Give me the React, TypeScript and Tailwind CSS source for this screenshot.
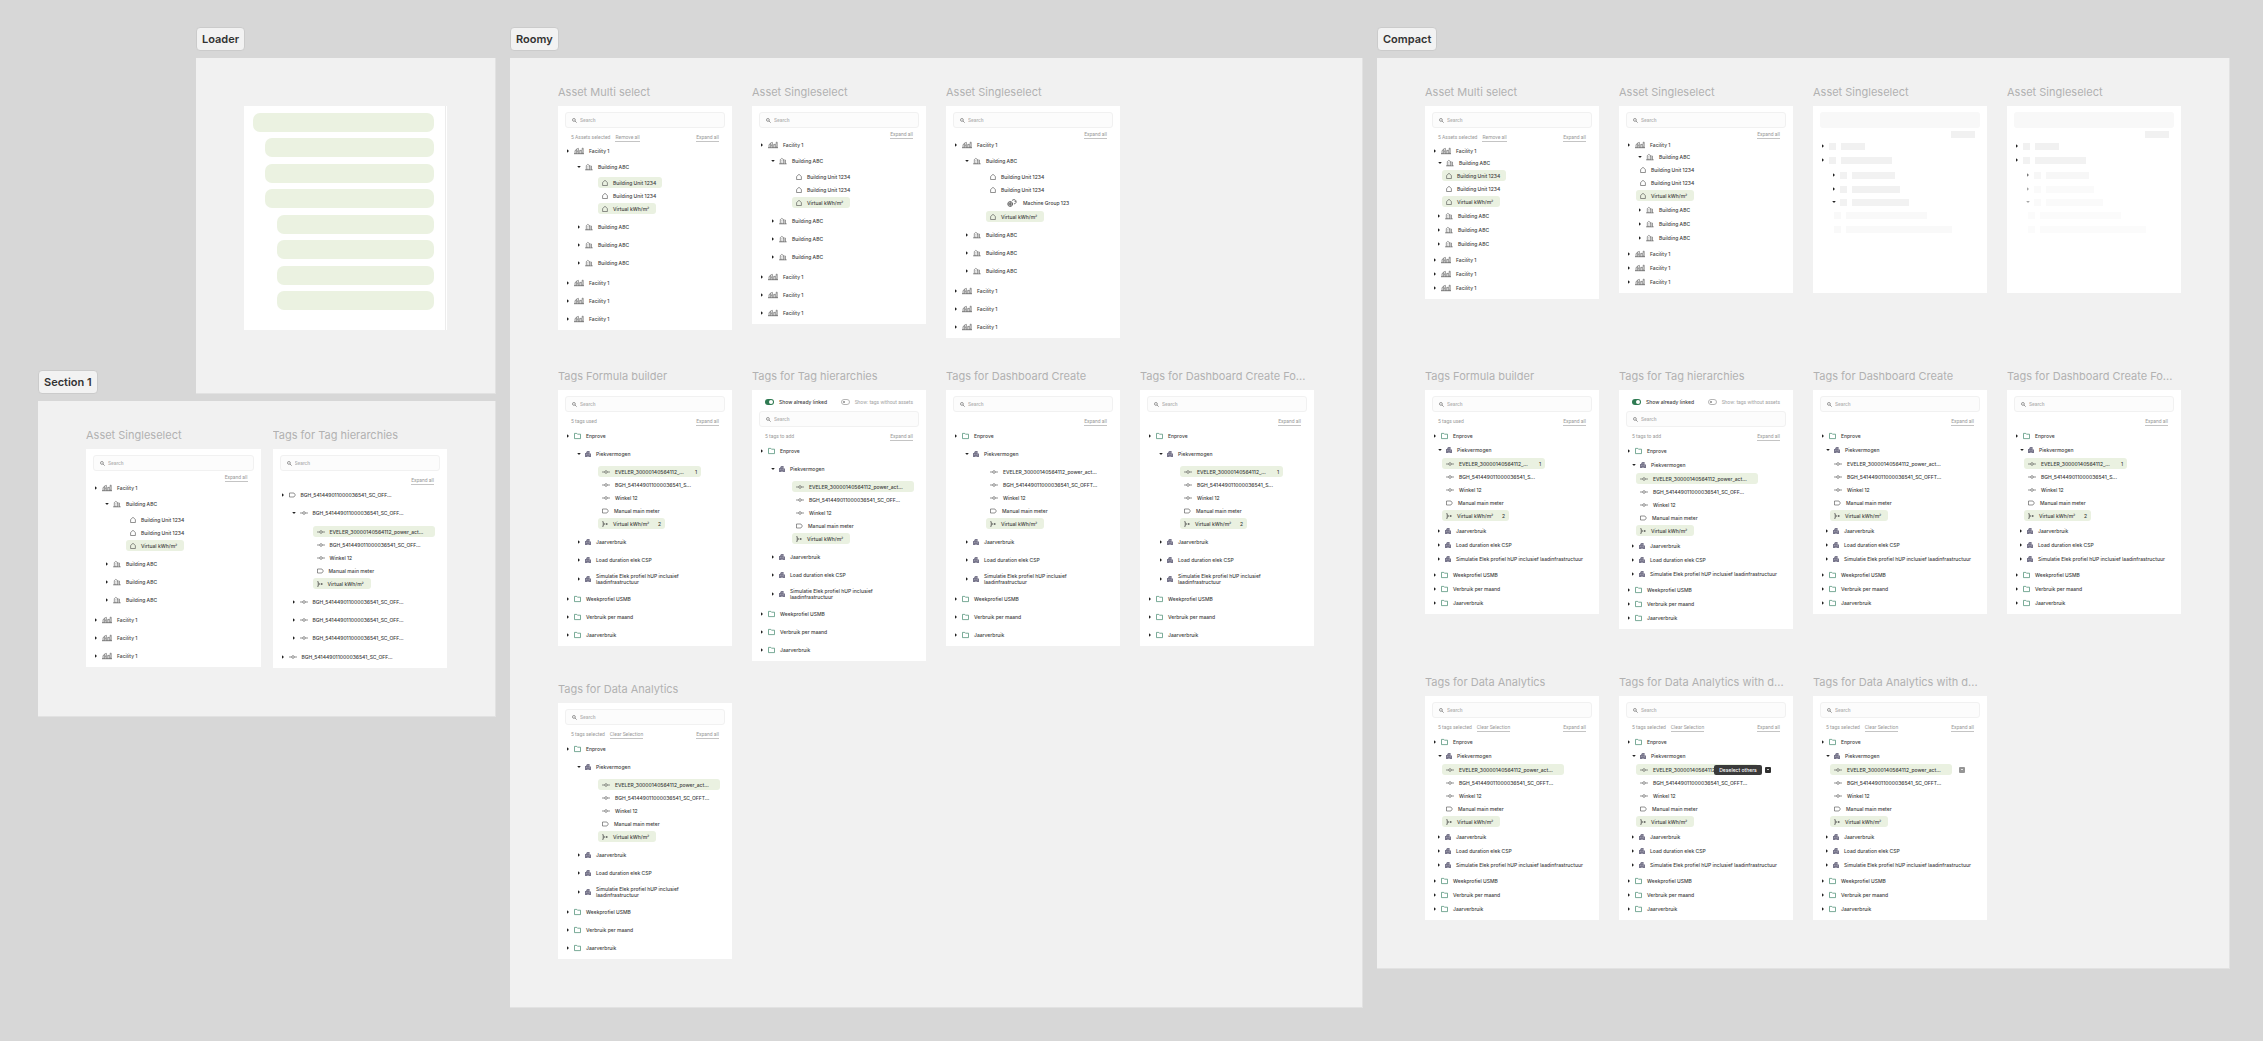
import React from "react";

type IconName = "facility" | "building" | "house" | "folder" | "office" | "meter" | "tag" | "virtual" | "machine";

type Row = {
  label: string;
  icon: IconName;
  caret?: "right" | "down";
  pad: keyof typeof PAD;
  h: keyof typeof HEIGHT;
  selected?: boolean;
  count?: number;
  width?: keyof typeof WIDTH;
  wrap?: boolean;
  action?: "tooltip" | "plain";
};

type Group = { gap?: keyof typeof GAP; rows: Row[] };

type Card = {
  title: string;
  info?: string;
  clear?: string;
  tight?: boolean;
  toggles?: boolean;
  groups: Group[];
  compact?: boolean;
};

const PAD = {
  root: "pl-2",
  kid: "pl-[19px]",
  kidOpen: "pl-[13px]",
  kidClosed: "pl-3",
  leaf: "pl-10",
  leafCompact: "pl-[17px]",
  machine: "pl-[57px]",
};
const HEIGHT = { 12: "h-3", 13: "h-[13px]", 14: "h-3.5", 16: "h-4", 18: "h-[18px]", 19: "h-[19px]" };
const GAP = { 0: "", 1: "mt-px", 2: "mt-0.5", 3: "mt-[3px]" };
const WIDTH = { long: "w-[122px]", short: "w-[103px]", unit: "w-16", virtual: "w-[58px]", virtualCount: "w-[67px]" };

const ICON_W: Record<IconName, string> = {
  facility: "w-2.5 mr-[5px]",
  building: "w-2 mr-[5px]",
  house: "w-1.5 mr-[5px]",
  folder: "w-[7px] mr-[5px]",
  office: "w-1.5 mr-[5px]",
  meter: "w-2 mr-[5px]",
  tag: "w-[7px] mr-[5px]",
  virtual: "w-1.5 mr-[5px]",
  machine: "w-2.5 mr-1.5",
};

function Icon({ name }: { name: IconName }) {
  const cls = `block shrink-0 h-2 ${ICON_W[name]}`;
  const line = { fill: "none", stroke: "#4a4a4a", strokeWidth: 0.6 };
  switch (name) {
    case "facility":
      return (
        <svg viewBox="0 0 10 8" className={cls} {...line} strokeWidth={0.55}>
          <path d="M0 6.7H10" strokeWidth={0.7} />
          <path d="M1 6.6V3.6L2.4 2.8M2.4 6.5V2.1L4.4 1.4V6.6M3.4 3.4V5.6M5.7 6.6V3.4H7.2V6.6M7.2 4.2L8.2 3.2V1.2H9.2V6.6M8.2 4.4V6.6" />
        </svg>
      );
    case "building":
      return (
        <svg viewBox="0 0 8 8" className={cls} {...line} strokeWidth={0.55}>
          <path d="M.2 6.8H7.6" strokeWidth={0.7} />
          <path d="M1.3 6.7V2.6L2.8 1.4 4.4 2.4V6.7M2.8 3.4v1M2.8 5.4v1.3M4.4 3.1H6.5V6.7M5.5 4.4V5.6" />
        </svg>
      );
    case "house":
      return (
        <svg viewBox="0 0 6 8" className={cls} {...line}>
          <path d="M.6 6.5V3.5L3 1.3 5.4 3.5V6.5Z" strokeLinejoin="round" />
        </svg>
      );
    case "folder":
      return (
        <svg viewBox="0 0 7 8" className={cls} fill="none" stroke="#4f9077" strokeWidth={0.75} strokeLinejoin="round">
          <path d="M.5 6.6V1.4H2.8L3.5 2.2H6.5V6.6Z" />
        </svg>
      );
    case "office":
      return (
        <svg viewBox="0 0 6 8" className={cls}>
          <path d="M0 7V3H1.2V2L2.4 1H4.6V3.4H6V7Z" fill="#77758b" />
          <path d="M2.7 7V5.9H3.3V7ZM1.3 4h.5v.6h-.5ZM2.8 2.4h.5v.6h-.5ZM2.8 4h.5v.6h-.5ZM4.5 4.6h.4v.6h-.4Z" fill="#fff" />
        </svg>
      );
    case "meter":
      return (
        <svg viewBox="0 0 8 8" className={cls} {...line}>
          <path d="M0 4H2.6M5.4 4H8" />
          <circle cx="4" cy="4" r="1.3" />
        </svg>
      );
    case "tag":
      return (
        <svg viewBox="0 0 7 8" className={cls} {...line}>
          <path d="M.5 2H4.9L6.4 4 4.9 6H.5Z" strokeLinejoin="round" />
        </svg>
      );
    case "virtual":
      return (
        <svg viewBox="0 0 6 8" className={cls} {...line}>
          <path d="M.3 1.5H1.2V6.5H.3M1.2 2.3C1.2 3.6 2 4 3 4H3.4M1.2 5.7C1.2 4.4 2 4 3 4" />
          <circle cx="4.5" cy="4" r=".7" fill="#4a4a4a" stroke="none" />
          <path d="M4 4H6" />
        </svg>
      );
    case "machine":
      return (
        <svg viewBox="0 0 10 8" className={cls} fill="none" stroke="#333" strokeWidth={0.7}>
          <circle cx="3.2" cy="5" r="2.4" />
          <circle cx="3.2" cy="5" r=".7" />
          <path d="M3.2 2.6V4.3M.8 5H2.5M3.9 5H5.6M3.2 5.7V7.4M5 1.6C6 .3 8.2.3 9 1.8M9.2 3.1C8.9 4.3 8 4.8 6.9 4.8M7.6 2.4H9.6" />
        </svg>
      );
  }
}

function Caret({ dir }: { dir: "right" | "down" }) {
  return (
    <svg viewBox="0 0 4 4" className="mr-1 block h-1 w-1 shrink-0" fill="#222">
      {dir === "right" ? <path d="M1 .2 3 2 1 3.8Z" /> : <path d="M.2 1H3.8L2 3Z" />}
    </svg>
  );
}

function TreeRow({ row }: { row: Row }) {
  const leaf = !row.caret;
  return (
    <li className={`relative flex items-center ${HEIGHT[row.h]} ${PAD[row.pad]}`}>
      <button
        type="button"
        aria-pressed={leaf ? !!row.selected : undefined}
        aria-expanded={leaf ? undefined : row.caret === "down"}
        className={`flex items-center whitespace-nowrap text-left ${leaf ? "h-[11px] rounded-[3px] pl-1" : ""} ${
          row.selected ? "bg-[#eaf1e1]" : ""
        } ${row.width ? WIDTH[row.width] : ""}`}
      >
        {row.caret && <Caret dir={row.caret} />}
        <Icon name={row.icon} />
        <span className={row.wrap ? "w-[96px] whitespace-normal" : ""}>{row.label}</span>
        {row.count && <span className="ml-auto mr-1">{row.count}</span>}
      </button>
      {row.action && (
        <input
          type="checkbox"
          defaultChecked
          aria-label="Deselect others"
          className={`relative ml-[7px] h-[6px] w-[6px] appearance-none rounded-[1px] before:absolute before:left-0.5 before:top-0.5 before:h-px before:w-0.5 ${
            row.action === "tooltip" ? "bg-[#2f2f2f] before:bg-[#c8c8c8]" : "bg-[#959595] before:bg-[#e4e4e4]"
          }`}
        />
      )}
      {row.action === "tooltip" && (
        <span role="tooltip" className="absolute left-[95px] top-[2px] h-[10px] w-12 rounded-[2px] bg-[#3a3a3a] text-center leading-[10px] text-white">
          Deselect others
        </span>
      )}
    </li>
  );
}

const linkCls = "h-2 border-b border-[#c4c4c4] leading-[7px] text-[#9a9a9a]";

function SearchBox() {
  return (
    <label className="mx-[7px] flex h-4 items-center rounded-[3px] border border-[#f1f1f1] bg-[#fcfcfc] pl-[6px]">
      <svg viewBox="0 0 6 6" className="mr-[3px] h-[5px] w-[5px] shrink-0" fill="none" stroke="#666" strokeWidth={0.8}>
        <circle cx="2.3" cy="2.3" r="1.7" />
        <path d="M3.6 3.6 5.6 5.6" />
      </svg>
      <input
        type="search"
        aria-label="Search"
        placeholder="Search"
        className="min-w-0 flex-1 bg-transparent font-['Roboto',sans-serif] text-[5px] leading-[7px] outline-none placeholder:text-[#b4b4b4]"
      />
    </label>
  );
}

function Toggle({ label, on }: { label: string; on?: boolean }) {
  return (
    <label className={`flex items-center gap-[5px] ${on ? "" : "font-['Roboto',sans-serif] font-normal text-[#a3a3a3]"}`}>
      <input
        type="checkbox"
        role="switch"
        defaultChecked={on}
        className={
          on
            ? "relative h-[6px] w-[9px] appearance-none rounded-full bg-[#2f7a52] before:absolute before:right-px before:top-px before:h-1 before:w-1 before:rounded-full before:bg-white"
            : "relative h-[6px] w-[9px] appearance-none rounded-full border border-[#b5b5b5] bg-white before:absolute before:left-px before:top-px before:h-0.5 before:w-0.5 before:rounded-full before:bg-[#8a8a8a]"
        }
      />
      <span>{label}</span>
    </label>
  );
}

function Titled({ title, children }: { title: string; children: React.ReactNode }) {
  return (
    <div className="min-w-0">
      <h3 className="mb-1 truncate text-[11px] font-normal leading-5 text-[#b1b1b1]">{title}</h3>
      {children}
    </div>
  );
}

function TreeCard({ card }: { card: Card }) {
  return (
    <Titled title={card.title}>
      <div
        className={`bg-white pt-1.5 text-[5px] font-medium leading-[6px] text-[#3d3d3d] ${card.compact ? "pb-1" : "pb-0.5"}`}
      >
        {card.toggles && (
          <div className="mb-[3px] flex h-3 items-center justify-between px-[13px]">
            <Toggle label="Show already linked" on />
            <Toggle label="Show: tags without assets" />
          </div>
        )}
        <SearchBox />
        <div
          className={`flex items-start gap-[5px] px-[13px] font-['Roboto',sans-serif] font-normal ${
            card.tight ? "mt-[3px]" : "mb-[3px] mt-1.5"
          }`}
        >
          {card.info && <span className="leading-[7px] text-[#9a9a9a]">{card.info}</span>}
          {card.clear && (
            <button type="button" className={linkCls}>
              {card.clear}
            </button>
          )}
          <button type="button" className={`ml-auto ${linkCls}`}>
            Expand all
          </button>
        </div>
        {card.groups.map((g, i) => (
          <ul key={i} className={GAP[g.gap ?? 0]}>
            {g.rows.map((r, j) => (
              <TreeRow key={j} row={r} />
            ))}
          </ul>
        ))}
      </div>
    </Titled>
  );
}

const times = (n: number, row: Row): Row[] => Array.from({ length: n }, () => row);

function assetCard(title: string, opts: { multi?: boolean; compact?: boolean; machine?: boolean }): Card {
  const { multi, compact, machine } = opts;
  const leafPad = compact ? "leafCompact" : "leaf";
  const closedPad = compact && multi ? "kidClosed" : "kid";
  const openPad = compact && multi ? "kidOpen" : "kid";
  const end = compact ? 14 : 18;
  const leaves: Row[] = [
    { label: "Building Unit 1234", icon: "house", pad: leafPad, h: 13, selected: multi, width: "unit" },
    { label: "Building Unit 1234", icon: "house", pad: leafPad, h: 13, width: "unit" },
  ];
  if (machine) leaves.push({ label: "Machine Group 123", icon: "machine", pad: "machine", h: 14 });
  leaves.push({ label: "Virtual kWh/m²", icon: "house", pad: leafPad, h: 13, selected: true, width: "virtual" });
  return {
    title,
    compact,
    tight: !multi,
    info: multi ? "5 Assets selected" : undefined,
    clear: multi ? "Remove all" : undefined,
    groups: [
      { rows: [{ label: "Facility 1", icon: "facility", caret: "right", pad: "root", h: 12 }] },
      { gap: compact ? 0 : 2, rows: [{ label: "Building ABC", icon: "building", caret: "down", pad: openPad, h: compact ? 12 : 16 }] },
      { gap: compact ? 0 : 1, rows: leaves },
      { gap: compact ? 1 : 3, rows: times(3, { label: "Building ABC", icon: "building", caret: "right", pad: closedPad, h: end }) },
      { gap: 2, rows: times(3, { label: "Facility 1", icon: "facility", caret: "right", pad: "root", h: end }) },
    ],
  };
}

type TagOpts = {
  compact?: boolean;
  info?: string;
  clear?: string;
  toggles?: boolean;
  counts?: boolean;
  plainFirst?: boolean;
  second?: string;
  action?: "tooltip" | "plain";
};

function tagCard(title: string, o: TagOpts): Card {
  const pad = o.compact ? "leafCompact" : "leaf";
  const kid = o.compact ? "kidClosed" : "kid";
  const h = o.compact ? 14 : 18;
  return {
    title,
    compact: o.compact,
    info: o.info,
    clear: o.clear,
    toggles: o.toggles,
    groups: [
      { rows: [{ label: "Enprove", icon: "folder", caret: "right", pad: "root", h: 13 }] },
      { gap: o.compact ? 1 : 3, rows: [{ label: "Piekvermogen", icon: "office", caret: "down", pad: o.compact ? "kidOpen" : "kid", h }] },
      {
        gap: o.compact ? 0 : 2,
        rows: [
          o.counts
            ? { label: "EVELER_30000140564112_...", icon: "meter", pad, h: 13, selected: true, count: 1, width: "short" }
            : { label: "EVELER_30000140564112_power_act...", icon: "meter", pad, h: 13, selected: !o.plainFirst, width: "long", action: o.action },
          { label: o.second ?? "BGH_541449011000036541_SC_OFFT...", icon: "meter", pad, h: 13 },
          { label: "Winkel 12", icon: "meter", pad, h: 13 },
          { label: "Manual main meter", icon: "tag", pad, h: 13 },
          { label: "Virtual kWh/m²", icon: "virtual", pad, h: 13, selected: true, count: o.counts ? 2 : undefined, width: o.counts ? "virtualCount" : "virtual" },
        ],
      },
      {
        gap: o.compact ? 2 : 3,
        rows: [
          { label: "Jaarverbruik", icon: "office", caret: "right", pad: kid, h },
          { label: "Load duration elek CSP", icon: "office", caret: "right", pad: kid, h },
          {
            label: "Simulatie Elek profiel hUP inclusief laadinfrastructuur",
            icon: "office",
            caret: "right",
            pad: kid,
            h: o.compact ? 14 : 19,
            wrap: !o.compact,
          },
        ],
      },
      {
        gap: 2,
        rows: ["Weekprofiel USMB", "Verbruik per maand", "Jaarverbruik"].map((label): Row => ({ label, icon: "folder", caret: "right", pad: "root", h })),
      },
    ],
  };
}

const OFF = "BGH_541449011000036541_SC_OFF...";
const SHORT = "BGH_541449011000036541_S...";

const sectionOneTags: Card = {
  title: "Tags for Tag hierarchies",
  groups: [
    { rows: [{ label: OFF, icon: "tag", caret: "right", pad: "root", h: 14 }] },
    { gap: 2, rows: [{ label: OFF, icon: "meter", caret: "down", pad: "kid", h: 18 }] },
    {
      gap: 3,
      rows: [
        { label: "EVELER_30000140564112_power_act...", icon: "meter", pad: "leaf", h: 13, selected: true, width: "long" },
        { label: OFF, icon: "meter", pad: "leaf", h: 13 },
        { label: "Winkel 12", icon: "meter", pad: "leaf", h: 13 },
        { label: "Manual main meter", icon: "tag", pad: "leaf", h: 13 },
        { label: "Virtual kWh/m²", icon: "virtual", pad: "leaf", h: 13, selected: true, width: "virtual" },
      ],
    },
    { gap: 3, rows: times(3, { label: OFF, icon: "meter", caret: "right", pad: "kid", h: 18 }) },
    { gap: 1, rows: [{ label: OFF, icon: "meter", caret: "right", pad: "root", h: 18 }] },
  ],
};

const tagRow = (compact: boolean): Card[] => [
  tagCard("Tags Formula builder", { compact, info: "5 tags used", counts: true, second: SHORT }),
  tagCard("Tags for Tag hierarchies", { compact, info: "5 tags to add", toggles: true, second: OFF }),
  tagCard("Tags for Dashboard Create", { compact, plainFirst: true }),
  tagCard("Tags for Dashboard Create Fo...", { compact, counts: true, second: SHORT }),
];

const analytics = { info: "5 tags selected", clear: "Clear Selection" };

const roomy: Card[][] = [
  [
    assetCard("Asset Multi select", { multi: true }),
    assetCard("Asset Singleselect", {}),
    assetCard("Asset Singleselect", { machine: true }),
  ],
  tagRow(false),
  [tagCard("Tags for Data Analytics", analytics)],
];

const compact: Card[][] = [
  [assetCard("Asset Multi select", { multi: true, compact: true }), assetCard("Asset Singleselect", { compact: true })],
  tagRow(true),
  [
    tagCard("Tags for Data Analytics", { ...analytics, compact: true }),
    tagCard("Tags for Data Analytics with d...", { ...analytics, compact: true, action: "tooltip" }),
    tagCard("Tags for Data Analytics with d...", { ...analytics, compact: true, action: "plain" }),
  ],
];

const SKELETON = [
  { row: "mt-px h-3.5 pl-2", bar: "w-6", caret: "right" },
  { row: "h-3.5 pl-2", bar: "w-[51px]", caret: "right" },
  { row: "mt-px h-3.5 pl-[19px]", bar: "w-[43px]", caret: "right" },
  { row: "h-3.5 pl-[19px]", bar: "w-12", caret: "right" },
  { row: "h-3 pl-[19px]", bar: "w-[57px]", caret: "down" },
  { row: "h-3.5 pl-[21px]", bar: "w-[81px]", caret: null },
  { row: "h-3.5 pl-[21px]", bar: "w-[106px]", caret: null },
] as const;

const SOLID = ["bg-[#f1f1f1]", "bg-[#f1f1f1]", "bg-[#f2f2f2]", "bg-[#f1f1f1]", "bg-[#f2f2f2]", "bg-[#f9f9f9]", "bg-[#f9f9f9]"];
const FADED = ["bg-[#f1f1f1]", "bg-[#f2f2f2]", "bg-[#f7f7f7]", "bg-[#fafafa]", "bg-[#fafafa]", "bg-[#fbfbfb]", "bg-[#fbfbfb]"];
const CARET_FADE = ["", "", "opacity-60", "opacity-40", "opacity-40", "", ""];

function SkeletonCard({ faded }: { faded?: boolean }) {
  const tone = faded ? FADED : SOLID;
  return (
    <Titled title="Asset Singleselect">
      <div className="bg-white pb-[57px] pt-1.5">
        <div className="mx-[7px] h-4 rounded-[3px] bg-[#f8f8f8]" />
        <div className="ml-auto mr-3 mt-[3px] h-[7px] w-6 bg-[#f1f1f1]" />
        <div className="mt-px">
          {SKELETON.map((s, i) => (
            <div key={i} className={`flex items-center ${s.row}`}>
              {s.caret && (
                <span className={faded ? CARET_FADE[i] : ""}>
                  <Caret dir={s.caret} />
                </span>
              )}
              <span className={`h-[7px] w-[7px] ${tone[i]}`} />
              <span className={`ml-[5px] h-[7px] ${s.bar} ${tone[i]}`} />
            </div>
          ))}
        </div>
      </div>
    </Titled>
  );
}

function Chip({ children }: { children: React.ReactNode }) {
  return (
    <h2 className="mb-[7px] flex h-6 w-fit items-center rounded-[4px] border border-[#cbcbcb] bg-[#f2f2f2] px-[5px] text-[11px] font-semibold text-[#333]">
      {children}
    </h2>
  );
}

const panel = "border-b border-r border-[#e2e2e2] bg-[#f1f1f1] px-12";

const LOADER = ["ml-0", "ml-3", "ml-3", "ml-3", "ml-6", "ml-6", "ml-6", "ml-6"];

export default function App() {
  return (
    <main className="grid min-h-screen grid-cols-[458fr_853fr_853fr] items-start gap-x-3.5 bg-[#d7d7d7] pb-8 pl-[38px] pr-[33px] pt-[27px] font-['Inter',sans-serif]">
      <div>
        <div className="flex items-end">
          <div className="flex-[158]">
            <Chip>Section 1</Chip>
          </div>
          <section className="flex-[300] pb-[7px]">
            <Chip>Loader</Chip>
            <div className={`pb-[63px] pt-12 ${panel}`}>
              <div className="bg-white pr-px">
                <div className="flex h-[224px] flex-col border-r border-[#ececec] pl-[9px] pr-[11px] pt-[7px]">
                  <div className="flex h-[197px] flex-col justify-between">
                    {LOADER.map((m, i) => (
                      <div key={i} className={`h-[19px] rounded-[7px] bg-[#ebf2e1] ${m}`} />
                    ))}
                  </div>
                </div>
              </div>
            </div>
          </section>
        </div>
        <section className={`grid grid-cols-2 items-start gap-x-3 pb-12 pt-6 ${panel}`}>
          <TreeCard card={assetCard("Asset Singleselect", {})} />
          <TreeCard card={sectionOneTags} />
        </section>
      </div>

      <section>
        <Chip>Roomy</Chip>
        <div className={`pb-12 pt-6 ${panel}`}>
          {roomy.map((cards, i) => (
            <div key={i} className={`grid grid-cols-4 items-start gap-x-5 ${["", "mt-7", "mt-[18px]"][i]}`}>
              {cards.map((c, j) => (
                <TreeCard key={j} card={c} />
              ))}
            </div>
          ))}
        </div>
      </section>

      <section>
        <Chip>Compact</Chip>
        <div className={`pb-12 pt-6 ${panel}`}>
          {compact.map((cards, i) => (
            <div key={i} className={`grid grid-cols-4 items-start gap-x-5 ${["", "mt-[67px]", "mt-[43px]"][i]}`}>
              {cards.map((c, j) => (
                <TreeCard key={j} card={c} />
              ))}
              {i === 0 && <SkeletonCard />}
              {i === 0 && <SkeletonCard faded />}
            </div>
          ))}
        </div>
      </section>
    </main>
  );
}
